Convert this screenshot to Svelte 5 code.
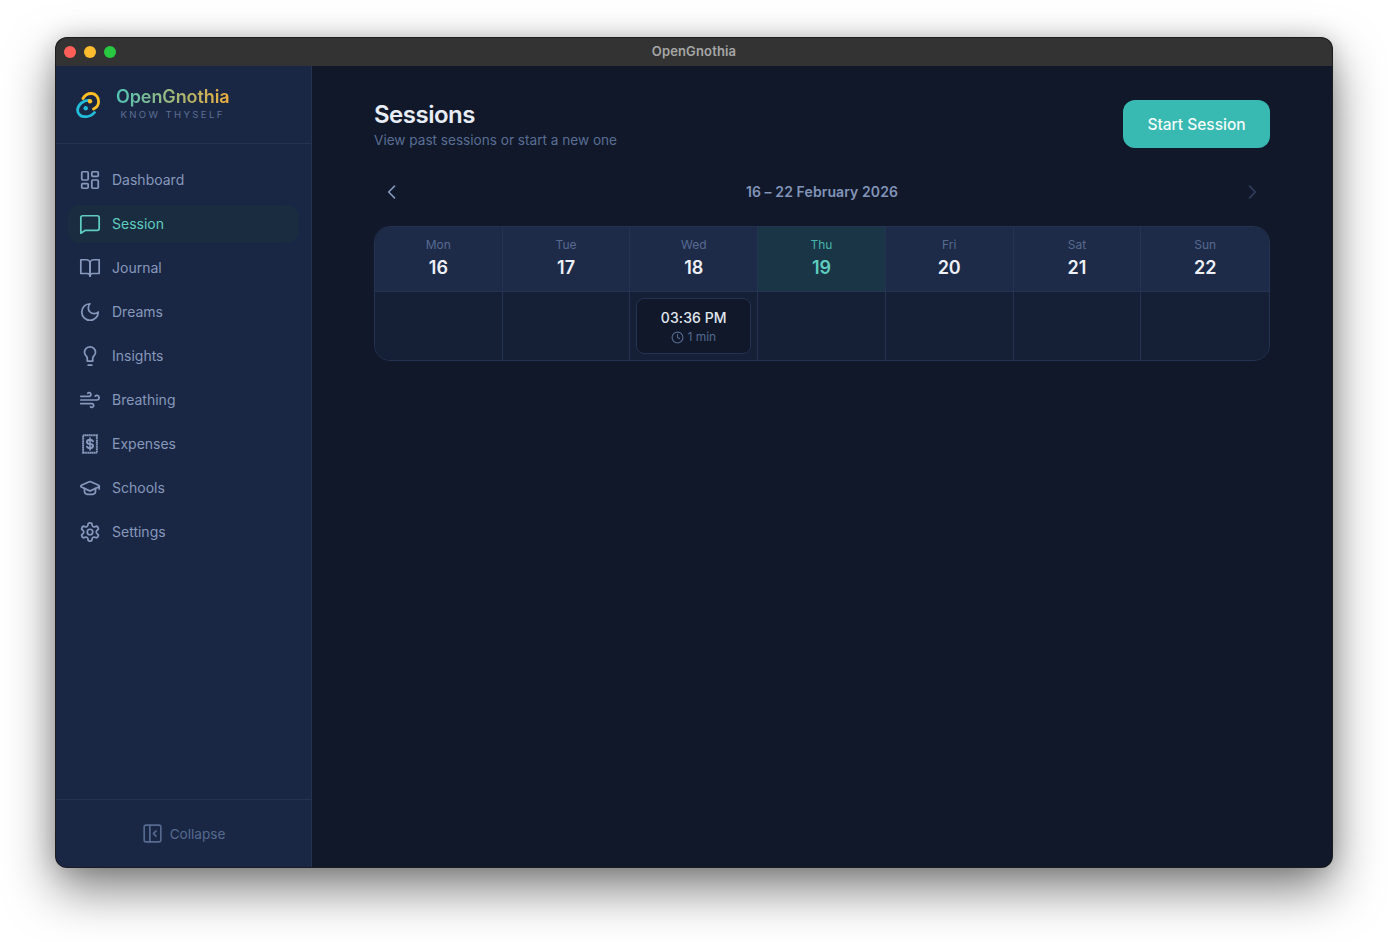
<script>
  const navItems = [
    { label: "Dashboard", icon: "dashboard" },
    { label: "Session", icon: "chat", active: true },
    { label: "Journal", icon: "book" },
    { label: "Dreams", icon: "moon" },
    { label: "Insights", icon: "bulb" },
    { label: "Breathing", icon: "wind" },
    { label: "Expenses", icon: "receipt" },
    { label: "Schools", icon: "cap" },
    { label: "Settings", icon: "gear" },
  ];

  const days = [
    { name: "Mon", date: 16 },
    { name: "Tue", date: 17 },
    { name: "Wed", date: 18, session: { time: "03:36 PM", length: "1 min" } },
    { name: "Thu", date: 19, today: true },
    { name: "Fri", date: 20 },
    { name: "Sat", date: 21 },
    { name: "Sun", date: 22 },
  ];
</script>

<div class="desktop">
  <div class="window">
    <div class="titlebar">
      <div class="lights">
        <span class="light red"></span>
        <span class="light yellow"></span>
        <span class="light green"></span>
      </div>
      <span class="title">OpenGnothia</span>
    </div>

    <div class="app">
      <aside class="sidebar">
        <div class="brand">
          <svg class="logo" viewBox="0 0 24 26" width="24" height="26" fill="none" stroke-width="2.8" stroke-linecap="round">
            <path d="M7 6.500C9 2.800 12.500 1.400 15.500 1.500 20 1.700 22.600 5.600 22.600 9.500 22.600 13 20.500 15.600 17.500 17" stroke="#fbbf24" />
            <path d="M13 8.200C7 8.500 2 12.500 1.600 18 1.400 22 5 24.700 9 24.700 13 24.700 16.500 23 18.500 20.500" stroke="#22bcd8" />
            <circle cx="14" cy="9.200" r="2.200" fill="#fbbf24" />
            <circle cx="9.700" cy="16.300" r="2.200" fill="#22bcd8" />
          </svg>
          <div class="brand-text">
            <div class="brand-name">OpenGnothia</div>
            <div class="brand-tag">KNOW THYSELF</div>
          </div>
        </div>

        <nav class="nav">
          {#each navItems as item}
            <div class="nav-item" class:active={item.active}>
              <svg class="icon" viewBox="0 0 24 24" width="22" height="22" fill="none" stroke="currentColor" stroke-width="1.900" stroke-linecap="round" stroke-linejoin="round">
                {#if item.icon === "dashboard"}
                  <rect x="3" y="3" width="7" height="9" rx="1" />
                  <rect x="14" y="3" width="7" height="5" rx="1" />
                  <rect x="14" y="12" width="7" height="9" rx="1" />
                  <rect x="3" y="16" width="7" height="5" rx="1" />
                {:else if item.icon === "chat"}
                  <path d="M2 22V5a2 2 0 0 1 2-2h16a2 2 0 0 1 2 2v12a2 2 0 0 1-2 2H6.500z" />
                {:else if item.icon === "book"}
                  <path d="M2 3h6a4 4 0 0 1 4 4v14a3 3 0 0 0-3-3H2z" />
                  <path d="M22 3h-6a4 4 0 0 0-4 4v14a3 3 0 0 1 3-3h7z" />
                {:else if item.icon === "moon"}
                  <path d="M12 3a6 6 0 0 0 9 9 9 9 0 1 1-9-9Z" />
                {:else if item.icon === "bulb"}
                  <path d="M15 14c.2-1 .7-1.700 1.500-2.500 1-.9 1.500-2.200 1.500-3.500A6 6 0 0 0 6 8c0 1 .2 2.200 1.500 3.500.7.7 1.300 1.500 1.500 2.500v3.500h6z" />
                  <path d="M10 22h4" />
                {:else if item.icon === "wind"}
                  <path d="M17.700 7.700a2.500 2.500 0 1 1 1.800 4.300H2" />
                  <path d="M9.600 4.600A2 2 0 1 1 11 8H2" />
                  <path d="M12.600 19.400A2 2 0 1 0 14 16H2" />
                {:else if item.icon === "receipt"}
                  <rect x="4.500" y="2.500" width="15" height="19" stroke-dasharray="1.700 0.300" stroke-linecap="butt" stroke-linejoin="miter" stroke-width="2.100" />
                  <path d="M15.200 9c-.5-.9-1.800-1.500-3.200-1.500-1.800 0-3.300.9-3.300 2.300S10.200 12 12 12s3.300.8 3.300 2.200-1.500 2.300-3.300 2.300c-1.400 0-2.700-.6-3.200-1.500" stroke-width="2.200" />
                  <path d="M12 5.500v13" stroke-width="1.800" />
                {:else if item.icon === "cap"}
                  <path d="M21.420 10.922a1 1 0 0 0-.019-1.838L12.830 5.180a2 2 0 0 0-1.660 0L2.600 9.080a1 1 0 0 0 0 1.832l8.570 3.908a2 2 0 0 0 1.660 0z" />
                  <path d="M22 10v3" />
                  <path d="M6 12.500V16a6 3 0 0 0 12 0v-3.500" />
                {:else if item.icon === "gear"}
                  <path d="M12.220 2h-.44a2 2 0 0 0-2 2v.18a2 2 0 0 1-1 1.730l-.43.25a2 2 0 0 1-2 0l-.15-.08a2 2 0 0 0-2.730.73l-.22.38a2 2 0 0 0 .73 2.730l.15.1a2 2 0 0 1 1 1.720v.51a2 2 0 0 1-1 1.740l-.15.09a2 2 0 0 0-.73 2.730l.22.38a2 2 0 0 0 2.730.73l.15-.08a2 2 0 0 1 2 0l.43.25a2 2 0 0 1 1 1.730V20a2 2 0 0 0 2 2h.44a2 2 0 0 0 2-2v-.18a2 2 0 0 1 1-1.730l.43-.25a2 2 0 0 1 2 0l.15.08a2 2 0 0 0 2.730-.73l.22-.39a2 2 0 0 0-.73-2.730l-.15-.08a2 2 0 0 1-1-1.740v-.5a2 2 0 0 1 1-1.740l.15-.09a2 2 0 0 0 .73-2.730l-.22-.38a2 2 0 0 0-2.730-.73l-.15.08a2 2 0 0 1-2 0l-.43-.25a2 2 0 0 1-1-1.730V4a2 2 0 0 0-2-2z" />
                  <circle cx="12" cy="12" r="3" />
                {/if}
              </svg>
              <span>{item.label}</span>
            </div>
          {/each}
        </nav>

        <div class="collapse">
          <svg viewBox="0 0 24 24" width="21" height="21" fill="none" stroke="currentColor" stroke-width="1.900" stroke-linecap="round" stroke-linejoin="round">
            <rect x="2.500" y="2.500" width="19" height="19" rx="2" />
            <path d="M9 2.500v19" />
            <path d="M16 9l-3 3 3 3" />
          </svg>
          <span>Collapse</span>
        </div>
      </aside>

      <main class="main">
        <header class="page-head">
          <div>
            <h1>Sessions</h1>
            <p>View past sessions or start a new one</p>
          </div>
          <button class="start">Start Session</button>
        </header>

        <div class="week-nav">
          <button class="arrow" aria-label="Previous week">
            <svg viewBox="0 0 24 24" width="20" height="20" fill="none" stroke="currentColor" stroke-width="2" stroke-linecap="round" stroke-linejoin="round"><path d="M15 5l-7 7 7 7" /></svg>
          </button>
          <span class="range">16 – 22 February 2026</span>
          <button class="arrow next" aria-label="Next week">
            <svg viewBox="0 0 24 24" width="20" height="20" fill="none" stroke="currentColor" stroke-width="2" stroke-linecap="round" stroke-linejoin="round"><path d="M9 5l7 7-7 7" /></svg>
          </button>
        </div>

        <div class="calendar">
          {#each days as day}
            <div class="day-head" class:today={day.today}>
              <div class="day-name">{day.name}</div>
              <div class="day-date">{day.date}</div>
            </div>
          {/each}
          {#each days as day}
            <div class="day-cell">
              {#if day.session}
                <div class="session">
                  <div class="session-time">{day.session.time}</div>
                  <div class="session-len">
                    <svg viewBox="0 0 24 24" width="13" height="13" fill="none" stroke="currentColor" stroke-width="2" stroke-linecap="round" stroke-linejoin="round"><circle cx="12" cy="12" r="10" /><path d="M12 6v6l4 2" /></svg>
                    {day.session.length}
                  </div>
                </div>
              {/if}
            </div>
          {/each}
        </div>
      </main>
    </div>
  </div>
</div>

<style>
  :global(body) {
    margin: 0;
    background: #fff;
    font-family: Inter, "Liberation Sans", sans-serif;
  }
  .desktop {
    height: 942px;
    box-sizing: border-box;
    padding: 38px 56px 75px;
    overflow: hidden;
  }
  .window {
    height: 100%;
    border-radius: 11px;
    overflow: hidden;
    display: flex;
    flex-direction: column;
    box-shadow: 0 0 0 1px #1c1c1e, 0 22px 50px rgba(0, 0, 0, 0.5), 0 0 24px rgba(0, 0, 0, 0.18);
    background: #0f172a;
  }
  .titlebar {
    height: 28px;
    flex: none;
    background: #333333;
    display: flex;
    align-items: center;
    justify-content: center;
    position: relative;
  }
  .lights {
    position: absolute;
    left: 8px;
    top: 8px;
    display: flex;
    gap: 8px;
  }
  .light {
    width: 12px;
    height: 12px;
    border-radius: 50%;
  }
  .red { background: #ff5f57; }
  .yellow { background: #febc2e; }
  .green { background: #28c840; }
  .title {
    color: #a6a6a6;
    font-size: 13px;
    font-weight: 600;
    letter-spacing: 0.15px;
    margin-bottom: 2px;
  }
  .app {
    flex: 1;
    display: flex;
    min-height: 0;
  }
  .sidebar {
    width: 256px;
    flex: none;
    box-sizing: border-box;
    background: #1a2744;
    border-right: 1px solid #253352;
    display: flex;
    flex-direction: column;
  }
  .brand {
    height: 78px;
    box-sizing: border-box;
    border-bottom: 1px solid #253352;
    display: flex;
    align-items: center;
    gap: 16px;
    padding: 0 20px;
  }
  .logo {
    flex: none;
  }
  .brand-text {
    margin-bottom: 1px;
  }
  .brand-name {
    font-size: 18px;
    font-weight: 600;
    line-height: 22px;
    letter-spacing: -0.1px;
    background: linear-gradient(90deg, #4fc3b7, #f0ad3c);
    -webkit-background-clip: text;
    background-clip: text;
    color: transparent;
  }
  .brand-tag {
    font-size: 9.6px;
    line-height: 14px;
    letter-spacing: 2.35px;
    color: #5a6e94;
    margin-left: 4.500px;
  }
  .nav {
    flex: 1;
    padding: 17px 12px;
    display: flex;
    flex-direction: column;
    gap: 6px;
  }
  .nav-item {
    height: 38px;
    box-sizing: border-box;
    border-radius: 12px;
    padding: 0 12px 0 11px;
    display: flex;
    align-items: center;
    gap: 11px;
    color: #8698bc;
    font-size: 14px;
  }
  .nav-item span {
    margin-bottom: 2px;
  }
  .nav-item.active {
    background: #1a2c40;
    color: #5eccbf;
  }
  .collapse {
    height: 68px;
    flex: none;
    box-sizing: border-box;
    border-top: 1px solid #253352;
    display: flex;
    align-items: center;
    justify-content: center;
    gap: 7px;
    color: #566a90;
    font-size: 13.6px;
  }
  .main {
    flex: 1;
    min-width: 0;
    padding: 34px 62px;
    background: #10182a;
  }
  .page-head {
    display: flex;
    justify-content: space-between;
    align-items: flex-start;
  }
  h1 {
    margin: 0;
    font-size: 24px;
    line-height: 30px;
    font-weight: 600;
    letter-spacing: -0.5px;
    color: #e8edf5;
  }
  .page-head p {
    margin: 0;
    font-size: 13.6px;
    line-height: 20px;
    color: #5a6e94;
  }
  .start {
    width: 147px;
    height: 48px;
    border: 0;
    border-radius: 12px;
    background: #38b9b1;
    color: #f4fbfa;
    font: 500 15.5px Inter, "Liberation Sans", sans-serif;
    padding: 0;
  }
  .week-nav {
    margin-top: 24px;
    height: 36px;
    display: flex;
    align-items: center;
    justify-content: space-between;
    padding: 0 8px;
  }
  .arrow {
    width: 20px;
    height: 20px;
    padding: 0;
    border: 0;
    background: none;
    color: #8294b8;
    display: flex;
  }
  .arrow.next {
    color: #2f3e5c;
  }
  .range {
    font-size: 14px;
    font-weight: 600;
    letter-spacing: 0.1px;
    color: #8294b8;
    margin-bottom: 1px;
  }
  .calendar {
    margin-top: 16px;
    display: grid;
    grid-template-columns: repeat(7, 1fr);
    grid-template-rows: 65px 69px;
    border: 1px solid #253352;
    border-radius: 16px;
    overflow: hidden;
    box-sizing: border-box;
    height: 135px;
  }
  .day-head {
    background: #1e2b48;
    border-right: 1px solid #253352;
    border-bottom: 1px solid #253352;
    text-align: center;
    padding-top: 10px;
  }
  .day-head.today {
    background: #1a3646;
  }
  .day-head:nth-child(7) {
    border-right: 0;
  }
  .day-name {
    font-size: 12px;
    line-height: 15px;
    color: #566a90;
  }
  .day-head.today .day-name {
    color: #45b5ab;
  }
  .day-date {
    font-size: 18px;
    line-height: 24px;
    margin-top: 4px;
    font-weight: 600;
    color: #edf1f7;
  }
  .day-head.today .day-date {
    color: #5eccbf;
  }
  .day-cell {
    background: #151f36;
    border-right: 1px solid #253352;
    padding: 6px;
  }
  .day-cell:last-child {
    border-right: 0;
  }
  .session {
    height: 56px;
    box-sizing: border-box;
    background: #10182a;
    border: 1px solid #253352;
    border-radius: 8px;
    text-align: center;
    padding-top: 10px;
  }
  .session-time {
    font-size: 14px;
    line-height: 18px;
    font-weight: 500;
    letter-spacing: 0.1px;
    color: #e2e8f0;
  }
  .session-len {
    margin-top: 2px;
    font-size: 12px;
    line-height: 16px;
    color: #566a90;
    display: flex;
    align-items: center;
    justify-content: center;
    gap: 3px;
  }
</style>
